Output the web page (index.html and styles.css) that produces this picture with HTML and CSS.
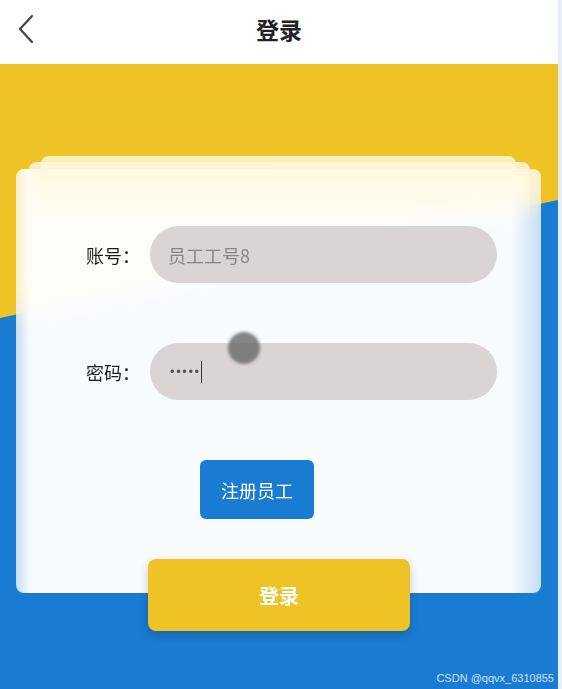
FILE: index.html
```html
<!DOCTYPE html>
<html lang="zh-cn">

<head>
    <meta charset="UTF-8">
    <meta name="viewport" content="width=device-width, initial-scale=1.0">
    <title>登录</title>
    <link rel="stylesheet" href="styles.css">
</head>

<body>
    <div class="app">
        <!-- 顶部导航 -->
        <div class="nav-bar">
            <a class="back" href="#">
                <svg width="18" height="30" viewBox="0 0 18 30">
                    <path d="M15 2 L3 15 L15 28" fill="none" stroke="#444" stroke-width="2.2" stroke-linecap="round" stroke-linejoin="round"/>
                </svg>
            </a>
            <h1 class="title">登录</h1>
        </div>

        <!-- 登录区域 -->
        <div class="login-page">
            <div class="login-card">
                <div class="form-row">
                    <label class="label">账号：</label>
                    <div class="field"><span class="placeholder">员工工号8</span></div>
                </div>
                <div class="form-row">
                    <label class="label">密码：</label>
                    <div class="field"><span class="dots">•••••</span><i class="caret"></i></div>
                </div>
                <button class="btn-register">注册员工</button>
                <button class="btn-login">登录</button>
            </div>
            <!-- 触摸点 -->
            <span class="touch"></span>
            <span class="mark">CSDN @qqvx_6310855</span>
        </div>
    </div>
</body>

</html>
```

FILE: styles.css
```css
* {
    padding: 0;
    margin: 0;
    box-sizing: border-box;
}

body {
    background-color: #e6eef7;
    font-family: "Noto Sans CJK SC", "Noto Sans", sans-serif;
}

.app {
    width: 558px;
    height: 689px;
    overflow: hidden;
}

.nav-bar {
    height: 64px;
    background-color: #fff;
    display: flex;
    align-items: center;
    justify-content: center;
    position: relative;
}

.nav-bar .back {
    position: absolute;
    left: 17px;
    top: 14px;
}

.nav-bar .title {
    font-size: 23px;
    line-height: 1;
    padding-bottom: 6px;
    font-weight: bold;
    color: #222;
}

.login-page {
    height: 625px;
    background-color: #efc226;
    padding-top: 105px;
    position: relative;
    z-index: 0;
}

/* 斜切的蓝色背景 */
.login-page::before {
    content: "";
    position: absolute;
    left: 0;
    top: 0;
    width: 100%;
    height: 100%;
    background-color: #1a7bd3;
    clip-path: polygon(0 254px, 100% 136px, 100% 100%, 0 100%);
    z-index: -1;
}

.login-card {
    width: 525px;
    margin-left: 16px;
    padding-top: 57px;
    background: linear-gradient(to right,
            rgba(255, 255, 255, 0.75),
            rgba(255, 255, 255, 0.97) 14px,
            rgba(255, 255, 255, 0.97) calc(100% - 30px),
            rgba(255, 255, 255, 0.75));
    backdrop-filter: blur(14px);
    border-radius: 8px;
    position: relative;
    display: flex;
    flex-direction: column;
}

/* 卡片后面叠着的两层 */
.login-card::before,
.login-card::after {
    content: "";
    position: absolute;
    height: 60px;
    border-radius: 8px;
    z-index: -1;
}

.login-card::before {
    top: -13px;
    left: 25px;
    right: 25px;
    background: linear-gradient(rgba(255, 250, 228, 0.85), rgba(255, 250, 228, 0) 100%);
}

.login-card::after {
    top: -7px;
    left: 13px;
    right: 11px;
    background: linear-gradient(rgba(255, 248, 222, 0.9), rgba(255, 248, 222, 0) 100%);
}

.form-row {
    display: flex;
    align-items: center;
    padding: 0 44px 0 70px;
    margin-bottom: 60px;
}

.label {
    width: 64px;
    font-size: 18px;
    color: #1c1c1c;
}

.field {
    flex: 1;
    height: 57px;
    border-radius: 29px;
    background-color: #dad4d5;
    display: flex;
    align-items: center;
    padding-left: 18px;
    font-size: 18px;
}

.placeholder {
    color: #858585;
}

.dots {
    font-family: "Liberation Sans", sans-serif;
    font-size: 13px;
    letter-spacing: 1.6px;
    color: #555;
    padding-left: 2px;
}

.caret {
    display: block;
    width: 1px;
    height: 22px;
    margin-left: 0;
    background-color: #333;
}

.btn-register {
    width: 114px;
    height: 59px;
    margin-left: 184px;
    border: 0;
    border-radius: 6px;
    background-color: #1a7bd3;
    color: #fff;
    font-family: inherit;
    font-size: 18px;
    cursor: pointer;
}

.btn-login {
    width: 262px;
    height: 72px;
    margin: 40px 0 -38px 132px;
    border: 0;
    border-radius: 8px;
    background-color: #efc226;
    color: #fff;
    font-family: inherit;
    font-size: 20px;
    font-weight: bold;
    box-shadow: 0 4px 10px rgba(0, 0, 0, 0.2);
    cursor: pointer;
}

.touch {
    position: absolute;
    left: 228px;
    top: 268px;
    width: 32px;
    height: 32px;
    border-radius: 50%;
    background-color: rgba(110, 110, 110, 0.85);
    filter: blur(1.5px);
}

.mark {
    position: absolute;
    right: 4px;
    bottom: 5px;
    font-family: "Liberation Sans", sans-serif;
    font-size: 11px;
    color: rgba(255, 255, 255, 0.8);
}
```
